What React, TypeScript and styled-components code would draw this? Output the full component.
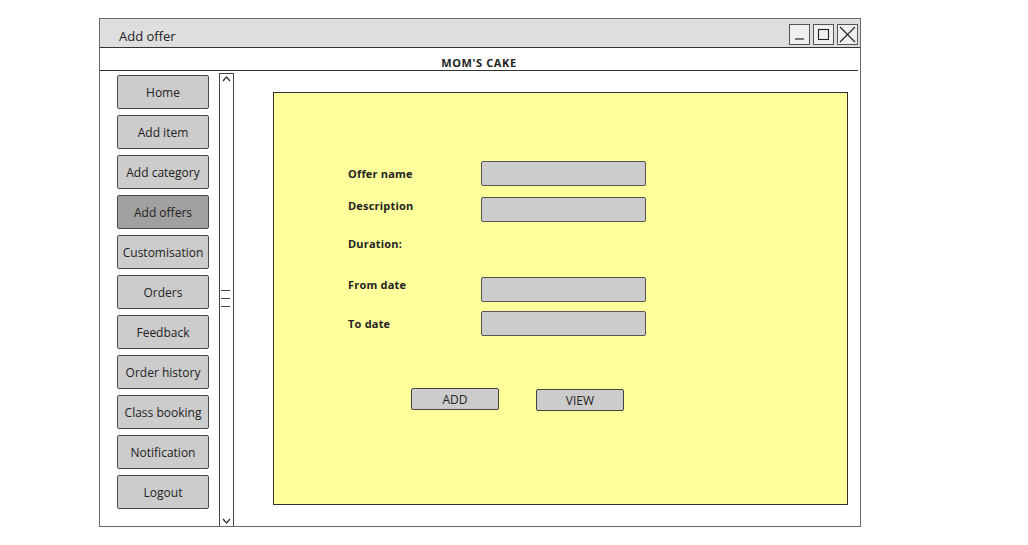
import styled, { createGlobalStyle } from "styled-components";

const GlobalStyle = createGlobalStyle`
    html, body {
        margin: 0;
        padding: 0;
        background: #ffffff;
    }
    body {
        font-family: "Open Sans", "DejaVu Sans", sans-serif;
        color: #222;
    }
`;

const Page = styled.div`
    padding: 18px 0 0 99px;
`;

const Window = styled.div`
    width: 760px;
    height: 507px;
    border: 1px solid #6a6a6a;
    display: flex;
    flex-direction: column;
    background: #fff;
`;

const TitleBar = styled.div`
    height: 28px;
    flex-shrink: 0;
    background: #dedede;
    border-bottom: 1px solid #333;
    display: flex;
    align-items: center;
    justify-content: space-between;
    padding: 0 2px 0 19px;
`;

const Title = styled.span`
    font-size: 13px;
    color: #222;
    padding-top: 5px;
`;

const Controls = styled.div`
    display: flex;
    gap: 3px;
    padding-top: 2px;
`;

const CtrlBox = styled.div`
    width: 19px;
    height: 19px;
    border: 1px solid #555;
    background: #f0f0f0;
    display: flex;
    align-items: center;
    justify-content: center;
`;

const Header = styled.div`
    height: 23px;
    flex-shrink: 0;
    margin-right: 2px;
    border-bottom: 1px solid #333;
    display: flex;
    align-items: flex-end;
    justify-content: center;
    font-size: 11px;
    font-weight: 700;
    letter-spacing: 0.6px;
    padding-bottom: 0;
    box-sizing: border-box;
`;

const Body = styled.div`
    flex: 1;
    display: flex;
    min-height: 0;
`;

const Sidebar = styled.div`
    flex-shrink: 0;
    padding: 4px 0 0 17px;
    display: flex;
    flex-direction: column;
    gap: 6px;
`;

const NavButton = styled.div<{ active?: boolean }>`
    width: 90px;
    height: 32px;
    border: 1px solid #4a4a4a;
    border-radius: 2px;
    background: ${({ active }) => (active ? "#a0a0a0" : "#cccccc")};
    display: flex;
    align-items: center;
    justify-content: center;
    font-size: 12px;
    color: #222;
    white-space: nowrap;
`;

const ScrollBar = styled.div`
    flex-shrink: 0;
    margin: 2px 0 0 10px;
    width: 13px;
    border: 1px solid #444;
    border-bottom: none;
    display: flex;
    flex-direction: column;
    justify-content: space-between;
    align-items: center;
    position: relative;
`;

const Grip = styled.div`
    position: absolute;
    left: 1px;
    top: 216px;
    display: flex;
    flex-direction: column;
    gap: 7px;
`;

const GripLine = styled.div`
    width: 9px;
    height: 1px;
    background: #444;
`;

const Main = styled.div`
    flex-shrink: 0;
    padding: 21px 0 0 39px;
`;

const Panel = styled.div`
    width: 575px;
    height: 413px;
    box-sizing: border-box;
    border: 1px solid #333;
    background: #ffff9c;
    padding: 68px 0 0 74px;
    display: flex;
    flex-direction: column;
`;

const Row = styled.div<{ top: number }>`
    display: flex;
    align-items: center;
    height: 25px;
    margin-top: ${({ top }) => top}px;
`;

const Label = styled.div<{ lift?: number }>`
    width: 133px;
    font-size: 11px;
    font-weight: 700;
    color: #222;
    position: relative;
    top: ${({ lift }) => -(lift || 0)}px;
    letter-spacing: 0.2px;
`;

const Input = styled.div`
    width: 163px;
    height: 23px;
    border: 1px solid #555;
    border-radius: 2px;
    background: #cccccc;
`;

const Actions = styled.div`
    display: flex;
    gap: 37px;
    margin: 52px 0 0 63px;
`;

const ActionButton = styled.div<{ drop?: number }>`
    width: 86px;
    height: 20px;
    border: 1px solid #444;
    border-radius: 2px;
    background: #cccccc;
    display: flex;
    align-items: center;
    justify-content: center;
    font-size: 12px;
    color: #222;
    margin-top: ${({ drop }) => drop || 0}px;
`;

const nav = [
    "Home",
    "Add item",
    "Add category",
    "Add offers",
    "Customisation",
    "Orders",
    "Feedback",
    "Order history",
    "Class booking",
    "Notification",
    "Logout",
];

const App = () => {
    return (
        <Page>
            <GlobalStyle />
            <Window>
                <TitleBar>
                    <Title>Add offer</Title>
                    <Controls>
                        <CtrlBox>
                            <svg width="13" height="13" viewBox="0 0 13 13">
                                <line x1="2" y1="11" x2="11" y2="11" stroke="#222" strokeWidth="1.2" />
                            </svg>
                        </CtrlBox>
                        <CtrlBox>
                            <svg width="13" height="13" viewBox="0 0 13 13">
                                <rect x="1.5" y="1.5" width="10" height="10" fill="none" stroke="#222" strokeWidth="1.1" />
                            </svg>
                        </CtrlBox>
                        <CtrlBox>
                            <svg width="17" height="17" viewBox="0 0 17 17">
                                <path d="M1 1 L16 16 M16 1 L1 16" stroke="#222" strokeWidth="1.1" />
                            </svg>
                        </CtrlBox>
                    </Controls>
                </TitleBar>
                <Header>MOM'S CAKE</Header>
                <Body>
                    <Sidebar>
                        {nav.map((n) => (
                            <NavButton key={n} active={n === "Add offers"}>
                                {n}
                            </NavButton>
                        ))}
                    </Sidebar>
                    <ScrollBar>
                        <svg width="11" height="10" viewBox="0 0 11 10">
                            <path d="M2 7 L5.5 3 L9 7" fill="none" stroke="#333" strokeWidth="1.2" />
                        </svg>
                        <Grip>
                            <GripLine />
                            <GripLine />
                            <GripLine />
                        </Grip>
                        <svg width="11" height="10" viewBox="0 0 11 10">
                            <path d="M2 3 L5.5 7 L9 3" fill="none" stroke="#333" strokeWidth="1.2" />
                        </svg>
                    </ScrollBar>
                    <Main>
                        <Panel>
                            <Row top={0}>
                                <Label>Offer name</Label>
                                <Input />
                            </Row>
                            <Row top={11}>
                                <Label lift={4}>Description</Label>
                                <Input />
                            </Row>
                            <Row top={9}>
                                <Label>Duration:</Label>
                            </Row>
                            <Row top={21}>
                                <Label lift={5}>From date</Label>
                                <Input />
                            </Row>
                            <Row top={9}>
                                <Label>To date</Label>
                                <Input />
                            </Row>
                            <Actions>
                                <ActionButton>ADD</ActionButton>
                                <ActionButton drop={1}>VIEW</ActionButton>
                            </Actions>
                        </Panel>
                    </Main>
                </Body>
            </Window>
        </Page>
    );
};

export default App;
